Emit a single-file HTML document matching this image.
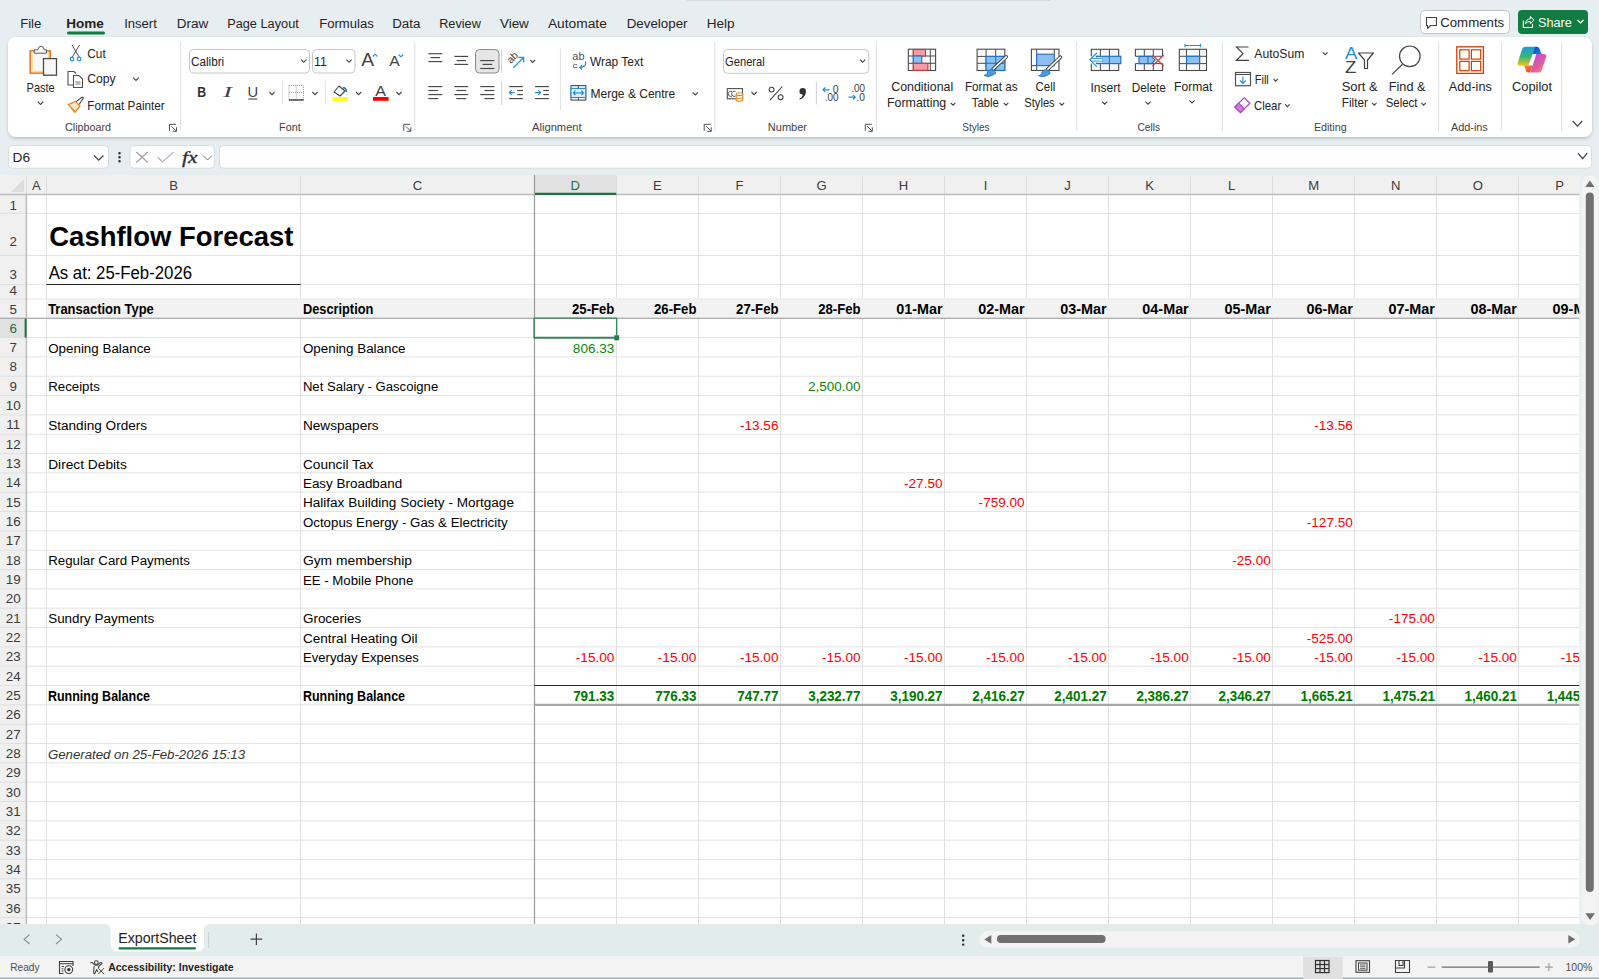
<!DOCTYPE html>
<html><head><meta charset="utf-8"><title>Excel - Cashflow Forecast</title>
<style>html,body{margin:0;padding:0;background:#E6EEF1;overflow:hidden;}svg{display:block;font-family:"Liberation Sans",sans-serif;}</style></head>
<body><svg width="1599" height="979" viewBox="0 0 1599 979">
<defs><clipPath id="gridclip"><rect x="26.4" y="194.5" width="1553.1" height="729.5"/></clipPath></defs>
<rect x="0.00" y="0.00" width="1599.00" height="175.00" fill="#E6EEF1" />
<line x1="687.00" y1="0.50" x2="1050.00" y2="0.50" stroke="#D3D9DD" stroke-width="1" />
<text x="20.18" y="28.00" font-family="Liberation Sans" font-size="13.66" fill="#242424" textLength="21.14" lengthAdjust="spacingAndGlyphs" >File</text>
<text x="66.18" y="28.00" font-family="Liberation Sans" font-size="13.66" fill="#242424" font-weight="bold" textLength="37.64" lengthAdjust="spacingAndGlyphs" >Home</text>
<text x="124.18" y="28.00" font-family="Liberation Sans" font-size="13.66" fill="#242424" textLength="32.64" lengthAdjust="spacingAndGlyphs" >Insert</text>
<text x="176.68" y="28.00" font-family="Liberation Sans" font-size="13.66" fill="#242424" textLength="31.64" lengthAdjust="spacingAndGlyphs" >Draw</text>
<text x="227.18" y="28.00" font-family="Liberation Sans" font-size="13.66" fill="#242424" textLength="71.64" lengthAdjust="spacingAndGlyphs" >Page Layout</text>
<text x="319.18" y="28.00" font-family="Liberation Sans" font-size="13.66" fill="#242424" textLength="54.64" lengthAdjust="spacingAndGlyphs" >Formulas</text>
<text x="392.18" y="28.00" font-family="Liberation Sans" font-size="13.66" fill="#242424" textLength="28.14" lengthAdjust="spacingAndGlyphs" >Data</text>
<text x="439.18" y="28.00" font-family="Liberation Sans" font-size="13.66" fill="#242424" textLength="41.64" lengthAdjust="spacingAndGlyphs" >Review</text>
<text x="499.93" y="28.00" font-family="Liberation Sans" font-size="13.66" fill="#242424" textLength="28.89" lengthAdjust="spacingAndGlyphs" >View</text>
<text x="547.93" y="28.00" font-family="Liberation Sans" font-size="13.66" fill="#242424" textLength="58.89" lengthAdjust="spacingAndGlyphs" >Automate</text>
<text x="626.68" y="28.00" font-family="Liberation Sans" font-size="13.66" fill="#242424" textLength="60.89" lengthAdjust="spacingAndGlyphs" >Developer</text>
<text x="706.68" y="28.00" font-family="Liberation Sans" font-size="13.66" fill="#242424" textLength="27.89" lengthAdjust="spacingAndGlyphs" >Help</text>
<rect x="67.00" y="31.50" width="38.00" height="3.00" fill="#107C41" rx="1.5" />
<rect x="1420.50" y="10.50" width="89.00" height="23.00" fill="#FFFFFF" rx="4" stroke="#C4C4C4" stroke-width="1" />
<path d="M1426.5,17.5 h10 v8 h-6 l-3,3 v-3 h-1 z" fill="none" stroke="#424242" stroke-width="1.1" stroke-linejoin="round"/>
<text x="1440.18" y="26.90" font-family="Liberation Sans" font-size="13.66" fill="#242424" textLength="64.04" lengthAdjust="spacingAndGlyphs" >Comments</text>
<rect x="1518.00" y="10.00" width="70.00" height="24.00" fill="#107C41" rx="4" />
<path d="M1523.3,20.5 v7 h9.2 v-3.8" fill="none" stroke="#FFFFFF" stroke-width="1.1" />
<path d="M1525.4,23.6 q0.8,-4.6 5,-4.8 v-2.4 l3.4,3.8 l-3.4,3.5 v-2.2 q-3,0 -5,2.1 z" fill="none" stroke="#FFFFFF" stroke-width="1" stroke-linejoin="round"/>
<text x="1537.98" y="26.90" font-family="Liberation Sans" font-size="13.66" fill="#FFFFFF" textLength="33.84" lengthAdjust="spacingAndGlyphs" >Share</text>
<path d="M1577.5,20 l3,3 l3,-3" fill="none" stroke="#FFFFFF" stroke-width="1.2" />
<filter id="sh" x="-5%" y="-20%" width="110%" height="150%"><feDropShadow dx="0" dy="1.5" stdDeviation="1.6" flood-color="#000" flood-opacity="0.2"/></filter>
<rect x="8.00" y="37.00" width="1584.00" height="100.00" fill="#FFFFFF" rx="8" filter="url(#sh)"/>
<rect x="8.50" y="145.50" width="100.00" height="22.70" fill="#FFFFFF" rx="4" stroke="#DADCDD" stroke-width="1" />
<text x="12.50" y="162.20" font-family="Liberation Sans" font-size="13.37" fill="#242424" textLength="17.60" lengthAdjust="spacingAndGlyphs" >D6</text>
<path d="M94,155.5 l4.7,4.7 l4.7,-4.7" fill="none" stroke="#424242" stroke-width="1.3" />
<rect x="118.30" y="152.10" width="2.40" height="2.40" fill="#303030" rx="1" />
<rect x="118.30" y="156.10" width="2.40" height="2.40" fill="#303030" rx="1" />
<rect x="118.30" y="160.10" width="2.40" height="2.40" fill="#303030" rx="1" />
<rect x="130.00" y="145.50" width="84.30" height="22.70" fill="#FFFFFF" rx="4" stroke="#DADCDD" stroke-width="1" />
<path d="M136.3,152 l11.5,10.5 M147.8,152 l-11.5,10.5" fill="none" stroke="#9E9E9E" stroke-width="1.1" />
<path d="M158,157.5 l4.5,4.3 l11,-9.6" fill="none" stroke="#A8A8A8" stroke-width="1.1" />
<text x="182.00" y="162.50" font-family="Liberation Serif" font-size="16.72" fill="#303030" font-style="italic" textLength="15.51" lengthAdjust="spacingAndGlyphs" stroke="#303030" stroke-width="0.35">fx</text>
<path d="M203,155.5 l4.5,4.5 l4.5,-4.5" fill="none" stroke="#707070" stroke-width="1" />
<rect x="219.50" y="145.50" width="1372.00" height="22.70" fill="#FFFFFF" rx="4" stroke="#DADCDD" stroke-width="1" />
<path d="M1578,153.2 l4.6,5.5 l4.6,-5.5" fill="none" stroke="#424242" stroke-width="1.2" />
<line x1="180.60" y1="42.00" x2="180.60" y2="131.00" stroke="#E0E0E0" stroke-width="1" />
<line x1="414.80" y1="42.00" x2="414.80" y2="131.00" stroke="#E0E0E0" stroke-width="1" />
<line x1="714.80" y1="42.00" x2="714.80" y2="131.00" stroke="#E0E0E0" stroke-width="1" />
<line x1="876.40" y1="42.00" x2="876.40" y2="131.00" stroke="#E0E0E0" stroke-width="1" />
<line x1="1076.60" y1="42.00" x2="1076.60" y2="131.00" stroke="#E0E0E0" stroke-width="1" />
<line x1="1222.40" y1="42.00" x2="1222.40" y2="131.00" stroke="#E0E0E0" stroke-width="1" />
<line x1="1438.60" y1="42.00" x2="1438.60" y2="131.00" stroke="#E0E0E0" stroke-width="1" />
<line x1="1501.70" y1="42.00" x2="1501.70" y2="131.00" stroke="#E0E0E0" stroke-width="1" />
<line x1="1561.60" y1="42.00" x2="1561.60" y2="131.00" stroke="#E0E0E0" stroke-width="1" />
<text x="65.00" y="131.00" font-family="Liberation Sans" font-size="11.63" fill="#424242" textLength="46.00" lengthAdjust="spacingAndGlyphs" >Clipboard</text>
<text x="279.10" y="131.00" font-family="Liberation Sans" font-size="11.63" fill="#424242" textLength="21.60" lengthAdjust="spacingAndGlyphs" >Font</text>
<text x="532.00" y="131.00" font-family="Liberation Sans" font-size="11.63" fill="#424242" textLength="49.70" lengthAdjust="spacingAndGlyphs" >Alignment</text>
<text x="767.80" y="131.00" font-family="Liberation Sans" font-size="11.63" fill="#424242" textLength="39.20" lengthAdjust="spacingAndGlyphs" >Number</text>
<text x="962.30" y="131.00" font-family="Liberation Sans" font-size="11.63" fill="#424242" textLength="27.30" lengthAdjust="spacingAndGlyphs" >Styles</text>
<text x="1137.50" y="131.00" font-family="Liberation Sans" font-size="11.63" fill="#424242" textLength="22.60" lengthAdjust="spacingAndGlyphs" >Cells</text>
<text x="1313.90" y="131.00" font-family="Liberation Sans" font-size="11.63" fill="#424242" textLength="32.70" lengthAdjust="spacingAndGlyphs" >Editing</text>
<text x="1451.00" y="131.00" font-family="Liberation Sans" font-size="11.63" fill="#424242" textLength="36.80" lengthAdjust="spacingAndGlyphs" >Add-ins</text>
<path d="M169.5,130.8 v-6.5 h6.5 M171.5,126.3 l5,5 M176.5,127.3 v4 h-4" fill="none" stroke="#505050" stroke-width="1" />
<path d="M403.8,130.8 v-6.5 h6.5 M405.8,126.3 l5,5 M410.8,127.3 v4 h-4" fill="none" stroke="#505050" stroke-width="1" />
<path d="M704.2,130.8 v-6.5 h6.5 M706.2,126.3 l5,5 M711.2,127.3 v4 h-4" fill="none" stroke="#505050" stroke-width="1" />
<path d="M865.3,130.8 v-6.5 h6.5 M867.3,126.3 l5,5 M872.3,127.3 v4 h-4" fill="none" stroke="#505050" stroke-width="1" />
<rect x="30.20" y="50.90" width="20.00" height="22.20" fill="#F8F8F8" stroke="#E8761C" stroke-width="1.6" />
<path d="M32.2,52.5 v19 h18 M48.4,52.5 v6" fill="none" stroke="#F9DC96" stroke-width="1.3" />
<path d="M34.2,53.2 v-3.4 h3.6 q0.6,-3.6 3.2,-3.6 q2.6,0 3.2,3.6 h2.3 v3.4 z" fill="#F8F8F8" stroke="#5A5A5A" stroke-width="1" />
<rect x="43.50" y="58.60" width="13.00" height="16.60" fill="#F8F8F8" stroke="#4A4A4A" stroke-width="1.3" />
<text x="26.58" y="92.00" font-family="Liberation Sans" font-size="12.06" fill="#242424" textLength="28.15" lengthAdjust="spacingAndGlyphs" >Paste</text>
<path d="M37.70,101.60 l2.8,2.8 l2.8,-2.8" fill="none" stroke="#424242" stroke-width="1.1" />
<path d="M72,45 l7.5,12.5 M79.5,45 l-7.5,12.5" fill="none" stroke="#505050" stroke-width="1" />
<circle cx="72" cy="59" r="1.8" fill="none" stroke="#1E8FD8" stroke-width="1.2"/><circle cx="79" cy="59" r="1.8" fill="none" stroke="#1E8FD8" stroke-width="1.2"/>
<text x="87.28" y="58.00" font-family="Liberation Sans" font-size="12.06" fill="#242424" textLength="18.45" lengthAdjust="spacingAndGlyphs" >Cut</text>
<path d="M73,85 h-5 v-13.5 h6 l2,2" fill="none" stroke="#505050" stroke-width="1.1" />
<path d="M73.5,75.5 h5.5 l3.5,3.5 v8.5 h-9 z" fill="#FFFFFF" stroke="#505050" stroke-width="1.1" />
<path d="M75.5,82 h5 M75.5,84 h5" fill="none" stroke="#505050" stroke-width="0.8" />
<text x="87.28" y="83.30" font-family="Liberation Sans" font-size="12.06" fill="#242424" textLength="28.45" lengthAdjust="spacingAndGlyphs" >Copy</text>
<path d="M133.20,77.60 l2.8,2.8 l2.8,-2.8" fill="none" stroke="#424242" stroke-width="1.1" />
<path d="M68.3,104.6 l7.2,-3.2 l4.4,4.6 l-5,6.4 z" fill="#FCE6CC" stroke="#E8891C" stroke-width="1.3" stroke-linejoin="round"/>
<path d="M71,107.5 l4,3.5" fill="none" stroke="#E8891C" stroke-width="1" />
<path d="M76,101.6 l6,-4.3 q1.5,-0.6 1.2,1.2 l-4,5.8" fill="#FFFFFF" stroke="#424242" stroke-width="1.1" stroke-linejoin="round"/>
<text x="87.28" y="109.70" font-family="Liberation Sans" font-size="12.06" fill="#242424" textLength="77.45" lengthAdjust="spacingAndGlyphs" >Format Painter</text>
<rect x="189.50" y="49.50" width="120.00" height="23.50" fill="#FFFFFF" rx="4" stroke="#C8C8C8" stroke-width="1" />
<text x="190.96" y="65.80" font-family="Liberation Sans" font-size="12.35" fill="#242424" textLength="33.28" lengthAdjust="spacingAndGlyphs" >Calibri</text>
<path d="M301.20,59.70 l2.6,2.6 l2.6,-2.6" fill="none" stroke="#424242" stroke-width="1.1" />
<rect x="312.50" y="49.50" width="42.50" height="23.50" fill="#FFFFFF" rx="4" stroke="#C8C8C8" stroke-width="1" />
<text x="313.96" y="65.80" font-family="Liberation Sans" font-size="12.35" fill="#242424" textLength="12.78" lengthAdjust="spacingAndGlyphs" >11</text>
<path d="M346.40,59.70 l2.6,2.6 l2.6,-2.6" fill="none" stroke="#424242" stroke-width="1.1" />
<text x="361.28" y="66.00" font-family="Liberation Sans" font-size="18.60" fill="#424242" textLength="12.83" lengthAdjust="spacingAndGlyphs" >A</text>
<path d="M372.8,56.5 l2.3,-2.3 l2.3,2.3" fill="none" stroke="#1E8FD8" stroke-width="1.1" />
<text x="389.15" y="66.00" font-family="Liberation Sans" font-size="14.10" fill="#424242" textLength="10.49" lengthAdjust="spacingAndGlyphs" >A</text>
<path d="M398.6,54.5 l2.3,2.3 l2.3,-2.3" fill="none" stroke="#1E8FD8" stroke-width="1.1" />
<text x="197.15" y="97.00" font-family="Liberation Sans" font-size="14.10" fill="#303030" font-weight="bold" textLength="8.89" lengthAdjust="spacingAndGlyphs" >B</text>
<text x="223.15" y="97.00" font-family="Liberation Serif" font-size="14.10" fill="#404040" font-style="italic" textLength="8.69" lengthAdjust="spacingAndGlyphs" >I</text>
<text x="247.47" y="96.50" font-family="Liberation Sans" font-size="13.81" fill="#404040" textLength="10.66" lengthAdjust="spacingAndGlyphs" >U</text>
<line x1="248.30" y1="99.00" x2="257.30" y2="99.00" stroke="#404040" stroke-width="1.1" />
<path d="M269.40,92.00 l2.6,2.6 l2.6,-2.6" fill="none" stroke="#424242" stroke-width="1.1" />
<line x1="282.50" y1="81.00" x2="282.50" y2="104.50" stroke="#E0E0E0" stroke-width="1" />
<path d="M289,85.5 h14.5 v14 h-14.5 z" fill="none" stroke="#909090" stroke-width="0.9" stroke-dasharray="1,1"/>
<path d="M296.2,85.5 v14 M289,92.5 h14.5" fill="none" stroke="#909090" stroke-width="0.9" stroke-dasharray="1,1"/>
<line x1="288.80" y1="100.00" x2="303.80" y2="100.00" stroke="#404040" stroke-width="1.4" />
<path d="M312.40,92.00 l2.6,2.6 l2.6,-2.6" fill="none" stroke="#424242" stroke-width="1.1" />
<line x1="325.30" y1="81.00" x2="325.30" y2="104.50" stroke="#E0E0E0" stroke-width="1" />
<path d="M334,92 l5,-6 l6,5 l-5,5 z" fill="#FFFFFF" stroke="#424242" stroke-width="1.1" stroke-linejoin="round"/>
<path d="M343,88 q3,-1 3.5,4" fill="none" stroke="#1E6FC8" stroke-width="1.5" />
<rect x="332.40" y="97.00" width="15.40" height="3.80" fill="#FFFF00" />
<path d="M356.00,92.00 l2.6,2.6 l2.6,-2.6" fill="none" stroke="#424242" stroke-width="1.1" />
<text x="375.39" y="95.70" font-family="Liberation Sans" font-size="15.12" fill="#424242" textLength="10.71" lengthAdjust="spacingAndGlyphs" >A</text>
<rect x="373.00" y="97.00" width="15.60" height="3.80" fill="#FF0000" />
<path d="M396.40,92.00 l2.6,2.6 l2.6,-2.6" fill="none" stroke="#424242" stroke-width="1.1" />
<line x1="428.30" y1="53.70" x2="442.30" y2="53.70" stroke="#4A4A4A" stroke-width="1.15" />
<line x1="430.50" y1="57.60" x2="440.10" y2="57.60" stroke="#4A4A4A" stroke-width="1.15" />
<line x1="428.30" y1="61.60" x2="442.30" y2="61.60" stroke="#4A4A4A" stroke-width="1.15" />
<line x1="454.30" y1="56.40" x2="468.20" y2="56.40" stroke="#4A4A4A" stroke-width="1.15" />
<line x1="456.60" y1="60.60" x2="466.00" y2="60.60" stroke="#4A4A4A" stroke-width="1.15" />
<line x1="454.30" y1="64.40" x2="468.20" y2="64.40" stroke="#4A4A4A" stroke-width="1.15" />
<rect x="475.50" y="49.50" width="23.50" height="23.50" fill="#E6E6E6" rx="4" stroke="#8A8A8A" stroke-width="1" />
<line x1="480.20" y1="60.60" x2="494.40" y2="60.60" stroke="#4A4A4A" stroke-width="1.15" />
<line x1="482.60" y1="64.40" x2="492.20" y2="64.40" stroke="#4A4A4A" stroke-width="1.15" />
<line x1="480.20" y1="68.50" x2="494.40" y2="68.50" stroke="#4A4A4A" stroke-width="1.15" />
<line x1="501.70" y1="49.60" x2="501.70" y2="72.90" stroke="#D0D0D0" stroke-width="1" />
<text x="507.87" y="64.00" font-family="Liberation Sans" font-size="10.47" fill="#424242" textLength="11.26" lengthAdjust="spacingAndGlyphs" transform="translate(-1.8,-2.6) rotate(-45 513.5 59.5)">ab</text>
<path d="M513.3,67.9 l10.3,-10.4 M518.5,57.4 h5.2 v5.2" fill="none" stroke="#1E8FD8" stroke-width="1.2" />
<path d="M530.30,60.00 l2.4,2.4 l2.4,-2.4" fill="none" stroke="#424242" stroke-width="1.1" />
<line x1="428.30" y1="86.60" x2="442.30" y2="86.60" stroke="#4A4A4A" stroke-width="1.15" />
<line x1="428.30" y1="90.50" x2="438.20" y2="90.50" stroke="#4A4A4A" stroke-width="1.15" />
<line x1="428.30" y1="94.60" x2="442.30" y2="94.60" stroke="#4A4A4A" stroke-width="1.15" />
<line x1="428.30" y1="98.60" x2="438.20" y2="98.60" stroke="#4A4A4A" stroke-width="1.15" />
<line x1="454.30" y1="86.60" x2="468.20" y2="86.60" stroke="#4A4A4A" stroke-width="1.15" />
<line x1="456.30" y1="90.50" x2="466.20" y2="90.50" stroke="#4A4A4A" stroke-width="1.15" />
<line x1="454.30" y1="94.60" x2="468.20" y2="94.60" stroke="#4A4A4A" stroke-width="1.15" />
<line x1="456.30" y1="98.60" x2="466.20" y2="98.60" stroke="#4A4A4A" stroke-width="1.15" />
<line x1="480.20" y1="86.60" x2="494.40" y2="86.60" stroke="#4A4A4A" stroke-width="1.15" />
<line x1="484.40" y1="90.50" x2="494.40" y2="90.50" stroke="#4A4A4A" stroke-width="1.15" />
<line x1="480.20" y1="94.60" x2="494.40" y2="94.60" stroke="#4A4A4A" stroke-width="1.15" />
<line x1="484.40" y1="98.60" x2="494.40" y2="98.60" stroke="#4A4A4A" stroke-width="1.15" />
<line x1="501.70" y1="81.60" x2="501.70" y2="104.80" stroke="#D0D0D0" stroke-width="1" />
<line x1="509.10" y1="86.60" x2="522.90" y2="86.60" stroke="#4A4A4A" stroke-width="1.15" />
<line x1="517.20" y1="90.50" x2="522.90" y2="90.50" stroke="#4A4A4A" stroke-width="1.15" />
<line x1="517.20" y1="94.60" x2="522.90" y2="94.60" stroke="#4A4A4A" stroke-width="1.15" />
<line x1="509.10" y1="98.60" x2="522.90" y2="98.60" stroke="#4A4A4A" stroke-width="1.15" />
<path d="M514.6,92.6 h-5 M511.6,90.4 l-2.2,2.2 l2.2,2.2" fill="none" stroke="#1E8FD8" stroke-width="1.2" />
<line x1="535.10" y1="86.60" x2="548.90" y2="86.60" stroke="#4A4A4A" stroke-width="1.15" />
<line x1="543.30" y1="90.50" x2="548.90" y2="90.50" stroke="#4A4A4A" stroke-width="1.15" />
<line x1="543.30" y1="94.60" x2="548.90" y2="94.60" stroke="#4A4A4A" stroke-width="1.15" />
<line x1="535.10" y1="98.60" x2="548.90" y2="98.60" stroke="#4A4A4A" stroke-width="1.15" />
<path d="M535.1,92.6 h5.2 M538.4,90.4 l2.2,2.2 l-2.2,2.2" fill="none" stroke="#1E8FD8" stroke-width="1.2" />
<line x1="560.40" y1="48.60" x2="560.40" y2="110.30" stroke="#E0E0E0" stroke-width="1" />
<text x="572.39" y="60.20" font-family="Liberation Sans" font-size="10.17" fill="#505050" textLength="12.22" lengthAdjust="spacingAndGlyphs" >ab</text>
<text x="572.55" y="68.30" font-family="Liberation Sans" font-size="7.56" fill="#505050" textLength="5.11" lengthAdjust="spacingAndGlyphs" >c</text>
<path d="M585.5,61.5 q1.2,5.5 -5.5,6 M582,65.2 l-2.2,2.3 l2.2,2.2" fill="none" stroke="#1E8FD8" stroke-width="1.2" />
<text x="589.88" y="66.00" font-family="Liberation Sans" font-size="12.06" fill="#242424" textLength="53.45" lengthAdjust="spacingAndGlyphs" >Wrap Text</text>
<rect x="571.00" y="85.60" width="14.80" height="14.50" fill="#FAFAFA" stroke="#505050" stroke-width="1.1" />
<rect x="571.00" y="88.40" width="14.80" height="9.10" fill="#E3F0FB" stroke="#1E8FD8" stroke-width="1.1" />
<line x1="578.40" y1="85.60" x2="578.40" y2="88.40" stroke="#505050" stroke-width="1" />
<line x1="578.40" y1="97.50" x2="578.40" y2="100.10" stroke="#505050" stroke-width="1" />
<path d="M573.3,92.9 h10.2 M575.5,90.7 l-2.2,2.2 l2.2,2.2 M581.3,90.7 l2.2,2.2 l-2.2,2.2" fill="none" stroke="#1E8FD8" stroke-width="1.2" />
<text x="590.48" y="98.00" font-family="Liberation Sans" font-size="12.06" fill="#242424" textLength="84.85" lengthAdjust="spacingAndGlyphs" >Merge &amp; Centre</text>
<path d="M692.70,92.30 l2.6,2.6 l2.6,-2.6" fill="none" stroke="#424242" stroke-width="1.1" />
<rect x="723.50" y="49.50" width="145.30" height="23.80" fill="#FFFFFF" rx="4" stroke="#C8C8C8" stroke-width="1" />
<text x="725.06" y="66.00" font-family="Liberation Sans" font-size="12.35" fill="#242424" textLength="39.68" lengthAdjust="spacingAndGlyphs" >General</text>
<path d="M860.00,59.70 l2.6,2.6 l2.6,-2.6" fill="none" stroke="#424242" stroke-width="1.1" />
<rect x="727.30" y="88.60" width="15.20" height="10.20" fill="#FFFFFF" stroke="#505050" stroke-width="1.1" />
<path d="M732,91.5 a2.6,2.6 0 1 0 0,4.6 M735.5,91.5 a2.6,2.6 0 1 0 0,4.6" fill="none" stroke="#505050" stroke-width="1" />
<path d="M736.2,94.2 v5.5 q0,1.6 3.3,1.6 q3.3,0 3.3,-1.6 v-5.5" fill="#FFFFFF" stroke="#E8891C" stroke-width="1.1" />
<ellipse cx="739.5" cy="94.2" rx="3.3" ry="1.4" fill="#FFFFFF" stroke="#E8891C" stroke-width="1.1"/>
<path d="M736.2,97 q0,1.5 3.3,1.5 q3.3,0 3.3,-1.5" fill="none" stroke="#E8891C" stroke-width="1" />
<path d="M751.50,92.00 l2.6,2.6 l2.6,-2.6" fill="none" stroke="#424242" stroke-width="1.1" />
<path d="M782.3,86.5 L770,100.2" fill="none" stroke="#424242" stroke-width="1.1" />
<circle cx="771.6" cy="89.6" r="2.4" fill="none" stroke="#424242" stroke-width="1.1"/><circle cx="780.6" cy="97.2" r="2.4" fill="none" stroke="#424242" stroke-width="1.1"/>
<circle cx="802.7" cy="91.3" r="3.2" fill="#303030"/>
<path d="M805.6,92 q0.5,5 -5.8,7.6 l-0.4,-1 q3.6,-1.8 3.4,-4.6 z" fill="#303030" />
<line x1="816.40" y1="81.50" x2="816.40" y2="104.60" stroke="#D0D0D0" stroke-width="1" />
<text x="832.89" y="93.30" font-family="Liberation Sans" font-size="10.17" fill="#404040" textLength="5.82" lengthAdjust="spacingAndGlyphs" >0</text>
<text x="824.89" y="100.60" font-family="Liberation Sans" font-size="10.17" fill="#404040" textLength="13.72" lengthAdjust="spacingAndGlyphs" >.00</text>
<path d="M829.5,89.8 h-6.5 M825.3,87.5 l-2.3,2.3 l2.3,2.3" fill="none" stroke="#1E8FD8" stroke-width="1.2" />
<text x="851.39" y="92.30" font-family="Liberation Sans" font-size="10.17" fill="#404040" textLength="13.72" lengthAdjust="spacingAndGlyphs" >.00</text>
<text x="856.39" y="100.60" font-family="Liberation Sans" font-size="10.17" fill="#404040" textLength="8.52" lengthAdjust="spacingAndGlyphs" >.0</text>
<path d="M848.5,97.2 h6.8 M853,94.9 l2.3,2.3 l-2.3,2.3" fill="none" stroke="#1E8FD8" stroke-width="1.2" />
<rect x="908.30" y="49.20" width="27.30" height="21.30" fill="#FAFAFA" stroke="#4A4A4A" stroke-width="1.1" />
<line x1="913.30" y1="49.20" x2="913.30" y2="70.50" stroke="#4A4A4A" stroke-width="1" />
<line x1="930.30" y1="49.20" x2="930.30" y2="70.50" stroke="#4A4A4A" stroke-width="1" />
<line x1="908.30" y1="56.00" x2="935.60" y2="56.00" stroke="#4A4A4A" stroke-width="1" />
<line x1="908.30" y1="63.30" x2="935.60" y2="63.30" stroke="#4A4A4A" stroke-width="1" />
<rect x="913.30" y="49.50" width="12.20" height="6.50" fill="#F59BA3" stroke="#D13438" stroke-width="1.1" />
<rect x="913.30" y="56.00" width="8.50" height="7.30" fill="#8CC0EE" stroke="#1F6FC5" stroke-width="1.1" />
<rect x="913.30" y="63.30" width="14.60" height="7.00" fill="#F59BA3" stroke="#D13438" stroke-width="1.1" />
<text x="891.28" y="90.60" font-family="Liberation Sans" font-size="12.06" fill="#242424" textLength="61.95" lengthAdjust="spacingAndGlyphs" >Conditional</text>
<text x="886.98" y="106.60" font-family="Liberation Sans" font-size="12.06" fill="#242424" textLength="59.25" lengthAdjust="spacingAndGlyphs" >Formatting</text>
<path d="M950.70,102.85 l2.3,2.3 l2.3,-2.3" fill="none" stroke="#424242" stroke-width="1.1" />
<rect x="977.10" y="49.20" width="27.70" height="21.30" fill="#FAFAFA" stroke="#4A4A4A" stroke-width="1.1" />
<line x1="986.10" y1="49.20" x2="986.10" y2="70.50" stroke="#4A4A4A" stroke-width="1" />
<line x1="995.70" y1="49.20" x2="995.70" y2="56.40" stroke="#4A4A4A" stroke-width="1" />
<line x1="977.10" y1="56.40" x2="1004.80" y2="56.40" stroke="#4A4A4A" stroke-width="1" />
<line x1="977.10" y1="63.30" x2="986.10" y2="63.30" stroke="#4A4A4A" stroke-width="1" />
<rect x="986.10" y="56.40" width="18.70" height="14.10" fill="#8CC0EE" stroke="#1F6FC5" stroke-width="1.1" />
<line x1="995.70" y1="56.40" x2="995.70" y2="70.50" stroke="#1F6FC5" stroke-width="1" />
<line x1="986.10" y1="63.30" x2="1004.80" y2="63.30" stroke="#1F6FC5" stroke-width="1" />
<line x1="1006.20" y1="56.80" x2="993.20" y2="69.00" stroke="#424242" stroke-width="3.6" stroke-linecap="round"/>
<line x1="1006.20" y1="56.80" x2="993.20" y2="69.00" stroke="#FFFFFF" stroke-width="1.6" stroke-linecap="round"/>
<path d="M995.7,73.2 q-1.5,-4.5 -5.5,-3.5 q-3,1 -2.8,3.5 q-1,1.8 -3.2,2.2 q5,2.8 11.5,-2.2 z" fill="#4A9AE0" stroke="#1F6FC5" stroke-width="0.9" />
<text x="964.98" y="90.60" font-family="Liberation Sans" font-size="12.06" fill="#242424" textLength="52.65" lengthAdjust="spacingAndGlyphs" >Format as</text>
<text x="971.78" y="106.60" font-family="Liberation Sans" font-size="12.06" fill="#242424" textLength="26.95" lengthAdjust="spacingAndGlyphs" >Table</text>
<path d="M1003.70,102.85 l2.3,2.3 l2.3,-2.3" fill="none" stroke="#424242" stroke-width="1.1" />
<rect x="1031.40" y="49.20" width="27.60" height="21.30" fill="#FAFAFA" stroke="#4A4A4A" stroke-width="1.1" />
<line x1="1036.70" y1="49.20" x2="1036.70" y2="70.50" stroke="#4A4A4A" stroke-width="1" />
<line x1="1054.30" y1="49.20" x2="1054.30" y2="54.20" stroke="#4A4A4A" stroke-width="1" />
<line x1="1031.40" y1="65.60" x2="1036.70" y2="65.60" stroke="#4A4A4A" stroke-width="1" />
<rect x="1036.70" y="54.20" width="17.60" height="11.40" fill="#8CC0EE" stroke="#1F6FC5" stroke-width="1.1" />
<line x1="1060.40" y1="57.20" x2="1047.60" y2="69.30" stroke="#424242" stroke-width="3.6" stroke-linecap="round"/>
<line x1="1060.40" y1="57.20" x2="1047.60" y2="69.30" stroke="#FFFFFF" stroke-width="1.6" stroke-linecap="round"/>
<path d="M1050.1,73.4 q-1.5,-4.5 -5.5,-3.5 q-3,1 -2.8,3.5 q-1,1.8 -3.2,2.2 q5,2.8 11.5,-2.2 z" fill="#4A9AE0" stroke="#1F6FC5" stroke-width="0.9" />
<text x="1035.48" y="90.60" font-family="Liberation Sans" font-size="12.06" fill="#242424" textLength="19.85" lengthAdjust="spacingAndGlyphs" >Cell</text>
<text x="1024.28" y="106.60" font-family="Liberation Sans" font-size="12.06" fill="#242424" textLength="30.45" lengthAdjust="spacingAndGlyphs" >Styles</text>
<path d="M1059.50,102.85 l2.3,2.3 l2.3,-2.3" fill="none" stroke="#424242" stroke-width="1.1" />
<rect x="1091.30" y="49.30" width="27.40" height="21.20" fill="#FAFAFA" stroke="#4A4A4A" stroke-width="1.1" />
<line x1="1100.40" y1="49.30" x2="1100.40" y2="70.50" stroke="#4A4A4A" stroke-width="1" />
<line x1="1109.40" y1="49.30" x2="1109.40" y2="70.50" stroke="#4A4A4A" stroke-width="1" />
<rect x="1088.00" y="56.30" width="10.00" height="7.30" fill="#FFFFFF" />
<rect x="1096.40" y="56.30" width="24.40" height="7.30" fill="#8CC0EE" stroke="#1F6FC5" stroke-width="1.2" />
<line x1="1109.40" y1="56.30" x2="1109.40" y2="63.60" stroke="#1F6FC5" stroke-width="1.1" />
<rect x="1092.00" y="57.50" width="10.00" height="5.00" fill="#FFFFFF" />
<path d="M1102.5,58.6 h-11 M1102.5,61.1 h-11" fill="none" stroke="#1E8FD8" stroke-width="0.9" />
<path d="M1096.8,53 l-7,6.85 l7,6.85" fill="none" stroke="#1E8FD8" stroke-width="1.1" />
<text x="1090.48" y="91.60" font-family="Liberation Sans" font-size="12.06" fill="#242424" textLength="30.15" lengthAdjust="spacingAndGlyphs" >Insert</text>
<path d="M1102.10,101.60 l2.6,2.6 l2.6,-2.6" fill="none" stroke="#424242" stroke-width="1.1" />
<path d="M1135.4,56.3 v-7 h27.2 v7 M1135.4,63.6 v6.9 h27.2 v-6.9" fill="#FAFAFA" stroke="#4A4A4A" stroke-width="1.1" />
<line x1="1135.40" y1="56.30" x2="1162.60" y2="56.30" stroke="#4A4A4A" stroke-width="1" />
<line x1="1135.40" y1="63.60" x2="1162.60" y2="63.60" stroke="#4A4A4A" stroke-width="1" />
<line x1="1144.30" y1="49.30" x2="1144.30" y2="56.30" stroke="#4A4A4A" stroke-width="1" />
<line x1="1153.30" y1="49.30" x2="1153.30" y2="56.30" stroke="#4A4A4A" stroke-width="1" />
<line x1="1144.30" y1="63.60" x2="1144.30" y2="70.50" stroke="#4A4A4A" stroke-width="1" />
<line x1="1153.30" y1="63.60" x2="1153.30" y2="70.50" stroke="#4A4A4A" stroke-width="1" />
<path d="M1139,56.3 h12.5 l3.6,3.65 l-3.6,3.65 h-12.5 z" fill="#8CC0EE" stroke="#1F6FC5" stroke-width="1.2" />
<line x1="1148.00" y1="56.30" x2="1148.00" y2="63.60" stroke="#1F6FC5" stroke-width="1.1" />
<path d="M1152.5,55 l11.2,11 M1163.7,55 l-11.2,11" fill="none" stroke="#E8343C" stroke-width="1.1" />
<text x="1131.78" y="91.60" font-family="Liberation Sans" font-size="12.06" fill="#242424" textLength="33.95" lengthAdjust="spacingAndGlyphs" >Delete</text>
<path d="M1145.50,101.60 l2.6,2.6 l2.6,-2.6" fill="none" stroke="#424242" stroke-width="1.1" />
<rect x="1179.30" y="49.30" width="27.20" height="21.20" fill="#FAFAFA" stroke="#4A4A4A" stroke-width="1.1" />
<line x1="1186.50" y1="49.30" x2="1186.50" y2="70.50" stroke="#4A4A4A" stroke-width="1" />
<line x1="1199.60" y1="49.30" x2="1199.60" y2="70.50" stroke="#4A4A4A" stroke-width="1" />
<line x1="1179.30" y1="56.30" x2="1206.50" y2="56.30" stroke="#4A4A4A" stroke-width="1" />
<line x1="1179.30" y1="63.60" x2="1206.50" y2="63.60" stroke="#4A4A4A" stroke-width="1" />
<rect x="1186.50" y="56.30" width="13.10" height="7.30" fill="#8CC0EE" stroke="#1F6FC5" stroke-width="1.2" />
<path d="M1185,45.5 h15.4 M1185,43.7 v3.6 M1200.4,43.7 v3.6" fill="none" stroke="#1E8FD8" stroke-width="1.1" />
<text x="1173.98" y="90.60" font-family="Liberation Sans" font-size="12.06" fill="#242424" textLength="38.45" lengthAdjust="spacingAndGlyphs" >Format</text>
<path d="M1189.40,100.30 l2.6,2.6 l2.6,-2.6" fill="none" stroke="#424242" stroke-width="1.1" />
<path d="M1248.5,47 h-12 l6.5,6.7 l-6.5,6.7 h12.5" fill="none" stroke="#424242" stroke-width="1.2" />
<text x="1254.28" y="57.90" font-family="Liberation Sans" font-size="12.06" fill="#242424" textLength="50.05" lengthAdjust="spacingAndGlyphs" >AutoSum</text>
<path d="M1322.80,52.30 l2.4,2.4 l2.4,-2.4" fill="none" stroke="#424242" stroke-width="1.1" />
<rect x="1235.50" y="72.50" width="15.00" height="13.20" fill="#FFFFFF" stroke="#505050" stroke-width="1.2" />
<line x1="1235.50" y1="74.50" x2="1250.50" y2="74.50" stroke="#505050" stroke-width="1" />
<path d="M1242.9,76.5 v6.5 M1240,80.5 l2.9,2.9 l2.9,-2.9" fill="none" stroke="#1E8FD8" stroke-width="1.1" />
<text x="1254.78" y="83.50" font-family="Liberation Sans" font-size="12.06" fill="#242424" textLength="14.05" lengthAdjust="spacingAndGlyphs" >Fill</text>
<path d="M1273.50,78.90 l2.2,2.2 l2.2,-2.2" fill="none" stroke="#424242" stroke-width="1.1" />
<path d="M1234.9,107 L1244.25,97.6 L1249.9,103.25 L1240.5,112.6 Z" fill="#FAFAFA" stroke="#B146C2" stroke-width="1.2" stroke-linejoin="round"/>
<path d="M1234.9,107 L1238.7,103.2 L1244.3,108.8 L1240.5,112.6 Z" fill="#C77ED3" stroke="#B146C2" stroke-width="1.1" stroke-linejoin="round"/>
<text x="1253.98" y="109.60" font-family="Liberation Sans" font-size="12.06" fill="#242424" textLength="27.25" lengthAdjust="spacingAndGlyphs" >Clear</text>
<path d="M1285.20,104.40 l2.2,2.2 l2.2,-2.2" fill="none" stroke="#424242" stroke-width="1.1" />
<text x="1344.90" y="58.70" font-family="Liberation Sans" font-size="16.72" fill="#1E8FD8" textLength="12.31" lengthAdjust="spacingAndGlyphs" >A</text>
<text x="1345.00" y="73.00" font-family="Liberation Sans" font-size="16.72" fill="#424242" textLength="11.31" lengthAdjust="spacingAndGlyphs" >Z</text>
<path d="M1358.5,53 h15 l-6,7 v8.5 h-3 v-8.5 z" fill="#FFFFFF" stroke="#424242" stroke-width="1.2" stroke-linejoin="round"/>
<text x="1341.68" y="90.60" font-family="Liberation Sans" font-size="12.06" fill="#242424" textLength="36.05" lengthAdjust="spacingAndGlyphs" >Sort &amp;</text>
<text x="1341.68" y="106.90" font-family="Liberation Sans" font-size="12.06" fill="#242424" textLength="26.25" lengthAdjust="spacingAndGlyphs" >Filter</text>
<path d="M1372.10,102.90 l2.2,2.2 l2.2,-2.2" fill="none" stroke="#424242" stroke-width="1.1" />
<circle cx="1409.8" cy="56.3" r="10.3" fill="none" stroke="#424242" stroke-width="1.2"/>
<line x1="1392.00" y1="74.40" x2="1402.50" y2="64.20" stroke="#424242" stroke-width="1.2" />
<text x="1388.78" y="90.60" font-family="Liberation Sans" font-size="12.06" fill="#242424" textLength="36.65" lengthAdjust="spacingAndGlyphs" >Find &amp;</text>
<text x="1385.78" y="106.90" font-family="Liberation Sans" font-size="12.06" fill="#242424" textLength="31.65" lengthAdjust="spacingAndGlyphs" >Select</text>
<path d="M1421.40,102.90 l2.2,2.2 l2.2,-2.2" fill="none" stroke="#424242" stroke-width="1.1" />
<rect x="1456.80" y="46.80" width="26.60" height="26.60" fill="none" stroke="#D83B01" stroke-width="1.3" />
<rect x="1459.80" y="49.80" width="9.30" height="9.30" fill="none" stroke="#D83B01" stroke-width="1.2" />
<rect x="1471.40" y="49.80" width="9.30" height="9.30" fill="none" stroke="#D83B01" stroke-width="1.2" />
<rect x="1459.80" y="61.40" width="9.30" height="9.30" fill="none" stroke="#D83B01" stroke-width="1.2" />
<rect x="1471.40" y="61.40" width="9.30" height="9.30" fill="none" stroke="#D83B01" stroke-width="1.2" />
<text x="1448.88" y="90.70" font-family="Liberation Sans" font-size="12.06" fill="#242424" textLength="42.95" lengthAdjust="spacingAndGlyphs" >Add-ins</text>
<defs><linearGradient id="cp1" x1="0" y1="0" x2="0" y2="1"><stop offset="0" stop-color="#1B9DE2"/><stop offset="0.5" stop-color="#2FB67A"/><stop offset="1" stop-color="#F0C419"/></linearGradient>
<linearGradient id="cp2" x1="0" y1="0" x2="1" y2="1"><stop offset="0" stop-color="#A64BE8"/><stop offset="0.6" stop-color="#E85C9A"/><stop offset="1" stop-color="#F8A34A"/></linearGradient>
<linearGradient id="cp3" x1="0" y1="0" x2="1" y2="1"><stop offset="0" stop-color="#0B3FCB"/><stop offset="1" stop-color="#1A7FE8"/></linearGradient>
<linearGradient id="cp4" x1="0" y1="0" x2="1" y2="1"><stop offset="0" stop-color="#FF8A3D"/><stop offset="1" stop-color="#E2402A"/></linearGradient></defs>
<path d="M1534.8,46.8 h2.6 q1.8,0.3 2.5,3 q0.6,3.6 2.5,4.3 h-10.5 z" fill="url(#cp3)" />
<path d="M1525.5,46.8 h9.8 l-6.4,17.3 q-0.6,1.4 -2.2,1.4 h-7.5 q-2,0 -1.6,-2.2 l4.3,-13.5 q0.9,-3 3.6,-3 z" fill="url(#cp1)" />
<path d="M1523,65.6 h9.6 l-2.6,6.9 h-2.2 q-1.5,0 -2.1,-2.4 q-0.6,-3.8 -2.7,-4.5 z" fill="url(#cp4)" />
<path d="M1536.3,54.1 h7.6 q2.7,0 2.4,2.6 l-4.8,14 q-0.6,1.8 -2.4,1.8 h-8.7 z" fill="url(#cp2)" />
<text x="1511.98" y="90.70" font-family="Liberation Sans" font-size="12.06" fill="#242424" textLength="40.05" lengthAdjust="spacingAndGlyphs" >Copilot</text>
<path d="M1572.7,121 l4.75,5.1 l4.75,-5.1" fill="none" stroke="#424242" stroke-width="1.2" />
<rect x="0.00" y="175.00" width="1579.50" height="749.00" fill="#FFFFFF" />
<rect x="0.00" y="175.00" width="1579.50" height="19.50" fill="#F0F0F0" />
<rect x="0.00" y="194.50" width="26.40" height="729.50" fill="#F0F0F0" />
<g clip-path="url(#gridclip)">
<line x1="46.50" y1="194.50" x2="46.50" y2="924.00" stroke="#E1E1E1" stroke-width="1" />
<line x1="300.50" y1="194.50" x2="300.50" y2="924.00" stroke="#E1E1E1" stroke-width="1" />
<line x1="534.50" y1="194.50" x2="534.50" y2="924.00" stroke="#E1E1E1" stroke-width="1" />
<line x1="616.50" y1="194.50" x2="616.50" y2="924.00" stroke="#E1E1E1" stroke-width="1" />
<line x1="698.50" y1="194.50" x2="698.50" y2="924.00" stroke="#E1E1E1" stroke-width="1" />
<line x1="780.50" y1="194.50" x2="780.50" y2="924.00" stroke="#E1E1E1" stroke-width="1" />
<line x1="862.50" y1="194.50" x2="862.50" y2="924.00" stroke="#E1E1E1" stroke-width="1" />
<line x1="944.50" y1="194.50" x2="944.50" y2="924.00" stroke="#E1E1E1" stroke-width="1" />
<line x1="1026.50" y1="194.50" x2="1026.50" y2="924.00" stroke="#E1E1E1" stroke-width="1" />
<line x1="1108.50" y1="194.50" x2="1108.50" y2="924.00" stroke="#E1E1E1" stroke-width="1" />
<line x1="1190.50" y1="194.50" x2="1190.50" y2="924.00" stroke="#E1E1E1" stroke-width="1" />
<line x1="1272.50" y1="194.50" x2="1272.50" y2="924.00" stroke="#E1E1E1" stroke-width="1" />
<line x1="1354.50" y1="194.50" x2="1354.50" y2="924.00" stroke="#E1E1E1" stroke-width="1" />
<line x1="1436.50" y1="194.50" x2="1436.50" y2="924.00" stroke="#E1E1E1" stroke-width="1" />
<line x1="1518.50" y1="194.50" x2="1518.50" y2="924.00" stroke="#E1E1E1" stroke-width="1" />
<line x1="1600.50" y1="194.50" x2="1600.50" y2="924.00" stroke="#E1E1E1" stroke-width="1" />
<line x1="26.40" y1="213.40" x2="1579.50" y2="213.40" stroke="#E3E3E3" stroke-width="1" />
<line x1="26.40" y1="255.50" x2="1579.50" y2="255.50" stroke="#E3E3E3" stroke-width="1" />
<line x1="26.40" y1="284.50" x2="1579.50" y2="284.50" stroke="#E3E3E3" stroke-width="1" />
<line x1="26.40" y1="299.00" x2="1579.50" y2="299.00" stroke="#E3E3E3" stroke-width="1" />
<line x1="26.40" y1="318.25" x2="1579.50" y2="318.25" stroke="#E3E3E3" stroke-width="1" />
<line x1="26.40" y1="337.58" x2="1579.50" y2="337.58" stroke="#E3E3E3" stroke-width="1" />
<line x1="26.40" y1="356.91" x2="1579.50" y2="356.91" stroke="#E3E3E3" stroke-width="1" />
<line x1="26.40" y1="376.24" x2="1579.50" y2="376.24" stroke="#E3E3E3" stroke-width="1" />
<line x1="26.40" y1="395.57" x2="1579.50" y2="395.57" stroke="#E3E3E3" stroke-width="1" />
<line x1="26.40" y1="414.90" x2="1579.50" y2="414.90" stroke="#E3E3E3" stroke-width="1" />
<line x1="26.40" y1="434.23" x2="1579.50" y2="434.23" stroke="#E3E3E3" stroke-width="1" />
<line x1="26.40" y1="453.56" x2="1579.50" y2="453.56" stroke="#E3E3E3" stroke-width="1" />
<line x1="26.40" y1="472.89" x2="1579.50" y2="472.89" stroke="#E3E3E3" stroke-width="1" />
<line x1="26.40" y1="492.22" x2="1579.50" y2="492.22" stroke="#E3E3E3" stroke-width="1" />
<line x1="26.40" y1="511.55" x2="1579.50" y2="511.55" stroke="#E3E3E3" stroke-width="1" />
<line x1="26.40" y1="530.88" x2="1579.50" y2="530.88" stroke="#E3E3E3" stroke-width="1" />
<line x1="26.40" y1="550.21" x2="1579.50" y2="550.21" stroke="#E3E3E3" stroke-width="1" />
<line x1="26.40" y1="569.54" x2="1579.50" y2="569.54" stroke="#E3E3E3" stroke-width="1" />
<line x1="26.40" y1="588.87" x2="1579.50" y2="588.87" stroke="#E3E3E3" stroke-width="1" />
<line x1="26.40" y1="608.20" x2="1579.50" y2="608.20" stroke="#E3E3E3" stroke-width="1" />
<line x1="26.40" y1="627.53" x2="1579.50" y2="627.53" stroke="#E3E3E3" stroke-width="1" />
<line x1="26.40" y1="646.86" x2="1579.50" y2="646.86" stroke="#E3E3E3" stroke-width="1" />
<line x1="26.40" y1="666.19" x2="1579.50" y2="666.19" stroke="#E3E3E3" stroke-width="1" />
<line x1="26.40" y1="685.52" x2="1579.50" y2="685.52" stroke="#E3E3E3" stroke-width="1" />
<line x1="26.40" y1="704.85" x2="1579.50" y2="704.85" stroke="#E3E3E3" stroke-width="1" />
<line x1="26.40" y1="724.18" x2="1579.50" y2="724.18" stroke="#E3E3E3" stroke-width="1" />
<line x1="26.40" y1="743.51" x2="1579.50" y2="743.51" stroke="#E3E3E3" stroke-width="1" />
<line x1="26.40" y1="762.84" x2="1579.50" y2="762.84" stroke="#E3E3E3" stroke-width="1" />
<line x1="26.40" y1="782.17" x2="1579.50" y2="782.17" stroke="#E3E3E3" stroke-width="1" />
<line x1="26.40" y1="801.50" x2="1579.50" y2="801.50" stroke="#E3E3E3" stroke-width="1" />
<line x1="26.40" y1="820.83" x2="1579.50" y2="820.83" stroke="#E3E3E3" stroke-width="1" />
<line x1="26.40" y1="840.16" x2="1579.50" y2="840.16" stroke="#E3E3E3" stroke-width="1" />
<line x1="26.40" y1="859.49" x2="1579.50" y2="859.49" stroke="#E3E3E3" stroke-width="1" />
<line x1="26.40" y1="878.82" x2="1579.50" y2="878.82" stroke="#E3E3E3" stroke-width="1" />
<line x1="26.40" y1="898.15" x2="1579.50" y2="898.15" stroke="#E3E3E3" stroke-width="1" />
<line x1="26.40" y1="917.48" x2="1579.50" y2="917.48" stroke="#E3E3E3" stroke-width="1" />
<line x1="26.40" y1="936.81" x2="1579.50" y2="936.81" stroke="#E3E3E3" stroke-width="1" />
</g>
<rect x="46.40" y="298.50" width="1533.10" height="19.75" fill="#F2F2F2" />
<line x1="46.50" y1="176.50" x2="46.50" y2="194.50" stroke="#DCDCDC" stroke-width="1" />
<line x1="300.50" y1="176.50" x2="300.50" y2="194.50" stroke="#DCDCDC" stroke-width="1" />
<line x1="534.50" y1="176.50" x2="534.50" y2="194.50" stroke="#DCDCDC" stroke-width="1" />
<line x1="616.50" y1="176.50" x2="616.50" y2="194.50" stroke="#DCDCDC" stroke-width="1" />
<line x1="698.50" y1="176.50" x2="698.50" y2="194.50" stroke="#DCDCDC" stroke-width="1" />
<line x1="780.50" y1="176.50" x2="780.50" y2="194.50" stroke="#DCDCDC" stroke-width="1" />
<line x1="862.50" y1="176.50" x2="862.50" y2="194.50" stroke="#DCDCDC" stroke-width="1" />
<line x1="944.50" y1="176.50" x2="944.50" y2="194.50" stroke="#DCDCDC" stroke-width="1" />
<line x1="1026.50" y1="176.50" x2="1026.50" y2="194.50" stroke="#DCDCDC" stroke-width="1" />
<line x1="1108.50" y1="176.50" x2="1108.50" y2="194.50" stroke="#DCDCDC" stroke-width="1" />
<line x1="1190.50" y1="176.50" x2="1190.50" y2="194.50" stroke="#DCDCDC" stroke-width="1" />
<line x1="1272.50" y1="176.50" x2="1272.50" y2="194.50" stroke="#DCDCDC" stroke-width="1" />
<line x1="1354.50" y1="176.50" x2="1354.50" y2="194.50" stroke="#DCDCDC" stroke-width="1" />
<line x1="1436.50" y1="176.50" x2="1436.50" y2="194.50" stroke="#DCDCDC" stroke-width="1" />
<line x1="1518.50" y1="176.50" x2="1518.50" y2="194.50" stroke="#DCDCDC" stroke-width="1" />
<line x1="1600.50" y1="176.50" x2="1600.50" y2="194.50" stroke="#DCDCDC" stroke-width="1" />
<line x1="26.40" y1="176.50" x2="26.40" y2="194.50" stroke="#DCDCDC" stroke-width="1" />
<line x1="0.00" y1="213.40" x2="26.40" y2="213.40" stroke="#E0E0E0" stroke-width="1" />
<line x1="0.00" y1="255.50" x2="26.40" y2="255.50" stroke="#E0E0E0" stroke-width="1" />
<line x1="0.00" y1="284.50" x2="26.40" y2="284.50" stroke="#E0E0E0" stroke-width="1" />
<line x1="0.00" y1="299.00" x2="26.40" y2="299.00" stroke="#E0E0E0" stroke-width="1" />
<line x1="0.00" y1="318.25" x2="26.40" y2="318.25" stroke="#E0E0E0" stroke-width="1" />
<line x1="0.00" y1="337.58" x2="26.40" y2="337.58" stroke="#E0E0E0" stroke-width="1" />
<line x1="0.00" y1="356.91" x2="26.40" y2="356.91" stroke="#E0E0E0" stroke-width="1" />
<line x1="0.00" y1="376.24" x2="26.40" y2="376.24" stroke="#E0E0E0" stroke-width="1" />
<line x1="0.00" y1="395.57" x2="26.40" y2="395.57" stroke="#E0E0E0" stroke-width="1" />
<line x1="0.00" y1="414.90" x2="26.40" y2="414.90" stroke="#E0E0E0" stroke-width="1" />
<line x1="0.00" y1="434.23" x2="26.40" y2="434.23" stroke="#E0E0E0" stroke-width="1" />
<line x1="0.00" y1="453.56" x2="26.40" y2="453.56" stroke="#E0E0E0" stroke-width="1" />
<line x1="0.00" y1="472.89" x2="26.40" y2="472.89" stroke="#E0E0E0" stroke-width="1" />
<line x1="0.00" y1="492.22" x2="26.40" y2="492.22" stroke="#E0E0E0" stroke-width="1" />
<line x1="0.00" y1="511.55" x2="26.40" y2="511.55" stroke="#E0E0E0" stroke-width="1" />
<line x1="0.00" y1="530.88" x2="26.40" y2="530.88" stroke="#E0E0E0" stroke-width="1" />
<line x1="0.00" y1="550.21" x2="26.40" y2="550.21" stroke="#E0E0E0" stroke-width="1" />
<line x1="0.00" y1="569.54" x2="26.40" y2="569.54" stroke="#E0E0E0" stroke-width="1" />
<line x1="0.00" y1="588.87" x2="26.40" y2="588.87" stroke="#E0E0E0" stroke-width="1" />
<line x1="0.00" y1="608.20" x2="26.40" y2="608.20" stroke="#E0E0E0" stroke-width="1" />
<line x1="0.00" y1="627.53" x2="26.40" y2="627.53" stroke="#E0E0E0" stroke-width="1" />
<line x1="0.00" y1="646.86" x2="26.40" y2="646.86" stroke="#E0E0E0" stroke-width="1" />
<line x1="0.00" y1="666.19" x2="26.40" y2="666.19" stroke="#E0E0E0" stroke-width="1" />
<line x1="0.00" y1="685.52" x2="26.40" y2="685.52" stroke="#E0E0E0" stroke-width="1" />
<line x1="0.00" y1="704.85" x2="26.40" y2="704.85" stroke="#E0E0E0" stroke-width="1" />
<line x1="0.00" y1="724.18" x2="26.40" y2="724.18" stroke="#E0E0E0" stroke-width="1" />
<line x1="0.00" y1="743.51" x2="26.40" y2="743.51" stroke="#E0E0E0" stroke-width="1" />
<line x1="0.00" y1="762.84" x2="26.40" y2="762.84" stroke="#E0E0E0" stroke-width="1" />
<line x1="0.00" y1="782.17" x2="26.40" y2="782.17" stroke="#E0E0E0" stroke-width="1" />
<line x1="0.00" y1="801.50" x2="26.40" y2="801.50" stroke="#E0E0E0" stroke-width="1" />
<line x1="0.00" y1="820.83" x2="26.40" y2="820.83" stroke="#E0E0E0" stroke-width="1" />
<line x1="0.00" y1="840.16" x2="26.40" y2="840.16" stroke="#E0E0E0" stroke-width="1" />
<line x1="0.00" y1="859.49" x2="26.40" y2="859.49" stroke="#E0E0E0" stroke-width="1" />
<line x1="0.00" y1="878.82" x2="26.40" y2="878.82" stroke="#E0E0E0" stroke-width="1" />
<line x1="0.00" y1="898.15" x2="26.40" y2="898.15" stroke="#E0E0E0" stroke-width="1" />
<line x1="0.00" y1="917.48" x2="26.40" y2="917.48" stroke="#E0E0E0" stroke-width="1" />
<line x1="0.00" y1="936.81" x2="26.40" y2="936.81" stroke="#E0E0E0" stroke-width="1" />
<rect x="534.30" y="175.00" width="82.05" height="19.50" fill="#E1E1E1" />
<rect x="0.00" y="318.25" width="26.40" height="19.33" fill="#E1E1E1" />
<line x1="0.00" y1="194.50" x2="1579.50" y2="194.50" stroke="#BDBDBD" stroke-width="1.5" />
<line x1="26.40" y1="194.50" x2="26.40" y2="924.00" stroke="#BDBDBD" stroke-width="1.5" />
<line x1="534.30" y1="193.80" x2="616.35" y2="193.80" stroke="#217346" stroke-width="2.2" />
<line x1="25.60" y1="318.25" x2="25.60" y2="337.58" stroke="#217346" stroke-width="2" />
<path d="M11,192 L24,192 L24,179 Z" fill="#DEDEDE" />
<text x="36.40" y="189.80" font-family="Liberation Sans" font-size="13.08" fill="#3B3B3B" text-anchor="middle" >A</text>
<text x="173.60" y="189.80" font-family="Liberation Sans" font-size="13.08" fill="#3B3B3B" text-anchor="middle" >B</text>
<text x="417.55" y="189.80" font-family="Liberation Sans" font-size="13.08" fill="#3B3B3B" text-anchor="middle" >C</text>
<text x="575.32" y="189.80" font-family="Liberation Sans" font-size="13.08" fill="#1E6E3E" text-anchor="middle" >D</text>
<text x="657.38" y="189.80" font-family="Liberation Sans" font-size="13.08" fill="#3B3B3B" text-anchor="middle" >E</text>
<text x="739.42" y="189.80" font-family="Liberation Sans" font-size="13.08" fill="#3B3B3B" text-anchor="middle" >F</text>
<text x="821.47" y="189.80" font-family="Liberation Sans" font-size="13.08" fill="#3B3B3B" text-anchor="middle" >G</text>
<text x="903.52" y="189.80" font-family="Liberation Sans" font-size="13.08" fill="#3B3B3B" text-anchor="middle" >H</text>
<text x="985.57" y="189.80" font-family="Liberation Sans" font-size="13.08" fill="#3B3B3B" text-anchor="middle" >I</text>
<text x="1067.62" y="189.80" font-family="Liberation Sans" font-size="13.08" fill="#3B3B3B" text-anchor="middle" >J</text>
<text x="1149.67" y="189.80" font-family="Liberation Sans" font-size="13.08" fill="#3B3B3B" text-anchor="middle" >K</text>
<text x="1231.72" y="189.80" font-family="Liberation Sans" font-size="13.08" fill="#3B3B3B" text-anchor="middle" >L</text>
<text x="1313.78" y="189.80" font-family="Liberation Sans" font-size="13.08" fill="#3B3B3B" text-anchor="middle" >M</text>
<text x="1395.82" y="189.80" font-family="Liberation Sans" font-size="13.08" fill="#3B3B3B" text-anchor="middle" >N</text>
<text x="1477.88" y="189.80" font-family="Liberation Sans" font-size="13.08" fill="#3B3B3B" text-anchor="middle" >O</text>
<text x="1559.50" y="189.80" font-family="Liberation Sans" font-size="13.08" fill="#3B3B3B" text-anchor="middle" >P</text>
<text x="13.30" y="209.60" font-family="Liberation Sans" font-size="13.37" fill="#3B3B3B" text-anchor="middle" >1</text>
<text x="13.30" y="245.90" font-family="Liberation Sans" font-size="13.37" fill="#3B3B3B" text-anchor="middle" >2</text>
<text x="13.30" y="278.80" font-family="Liberation Sans" font-size="13.37" fill="#3B3B3B" text-anchor="middle" >3</text>
<text x="13.30" y="294.90" font-family="Liberation Sans" font-size="13.37" fill="#3B3B3B" text-anchor="middle" >4</text>
<text x="13.30" y="313.70" font-family="Liberation Sans" font-size="13.37" fill="#3B3B3B" text-anchor="middle" >5</text>
<text x="13.30" y="333.20" font-family="Liberation Sans" font-size="13.37" fill="#1E6E3E" text-anchor="middle" >6</text>
<text x="13.30" y="352.16" font-family="Liberation Sans" font-size="13.37" fill="#3B3B3B" text-anchor="middle" >7</text>
<text x="13.30" y="371.49" font-family="Liberation Sans" font-size="13.37" fill="#3B3B3B" text-anchor="middle" >8</text>
<text x="13.30" y="390.82" font-family="Liberation Sans" font-size="13.37" fill="#3B3B3B" text-anchor="middle" >9</text>
<text x="13.30" y="410.15" font-family="Liberation Sans" font-size="13.37" fill="#3B3B3B" text-anchor="middle" >10</text>
<text x="13.30" y="429.48" font-family="Liberation Sans" font-size="13.37" fill="#3B3B3B" text-anchor="middle" >11</text>
<text x="13.30" y="448.81" font-family="Liberation Sans" font-size="13.37" fill="#3B3B3B" text-anchor="middle" >12</text>
<text x="13.30" y="468.14" font-family="Liberation Sans" font-size="13.37" fill="#3B3B3B" text-anchor="middle" >13</text>
<text x="13.30" y="487.47" font-family="Liberation Sans" font-size="13.37" fill="#3B3B3B" text-anchor="middle" >14</text>
<text x="13.30" y="506.80" font-family="Liberation Sans" font-size="13.37" fill="#3B3B3B" text-anchor="middle" >15</text>
<text x="13.30" y="526.13" font-family="Liberation Sans" font-size="13.37" fill="#3B3B3B" text-anchor="middle" >16</text>
<text x="13.30" y="545.46" font-family="Liberation Sans" font-size="13.37" fill="#3B3B3B" text-anchor="middle" >17</text>
<text x="13.30" y="564.79" font-family="Liberation Sans" font-size="13.37" fill="#3B3B3B" text-anchor="middle" >18</text>
<text x="13.30" y="584.12" font-family="Liberation Sans" font-size="13.37" fill="#3B3B3B" text-anchor="middle" >19</text>
<text x="13.30" y="603.45" font-family="Liberation Sans" font-size="13.37" fill="#3B3B3B" text-anchor="middle" >20</text>
<text x="13.30" y="622.78" font-family="Liberation Sans" font-size="13.37" fill="#3B3B3B" text-anchor="middle" >21</text>
<text x="13.30" y="642.11" font-family="Liberation Sans" font-size="13.37" fill="#3B3B3B" text-anchor="middle" >22</text>
<text x="13.30" y="661.44" font-family="Liberation Sans" font-size="13.37" fill="#3B3B3B" text-anchor="middle" >23</text>
<text x="13.30" y="680.77" font-family="Liberation Sans" font-size="13.37" fill="#3B3B3B" text-anchor="middle" >24</text>
<text x="13.30" y="700.10" font-family="Liberation Sans" font-size="13.37" fill="#3B3B3B" text-anchor="middle" >25</text>
<text x="13.30" y="719.43" font-family="Liberation Sans" font-size="13.37" fill="#3B3B3B" text-anchor="middle" >26</text>
<text x="13.30" y="738.76" font-family="Liberation Sans" font-size="13.37" fill="#3B3B3B" text-anchor="middle" >27</text>
<text x="13.30" y="758.09" font-family="Liberation Sans" font-size="13.37" fill="#3B3B3B" text-anchor="middle" >28</text>
<text x="13.30" y="777.42" font-family="Liberation Sans" font-size="13.37" fill="#3B3B3B" text-anchor="middle" >29</text>
<text x="13.30" y="796.75" font-family="Liberation Sans" font-size="13.37" fill="#3B3B3B" text-anchor="middle" >30</text>
<text x="13.30" y="816.08" font-family="Liberation Sans" font-size="13.37" fill="#3B3B3B" text-anchor="middle" >31</text>
<text x="13.30" y="835.41" font-family="Liberation Sans" font-size="13.37" fill="#3B3B3B" text-anchor="middle" >32</text>
<text x="13.30" y="854.74" font-family="Liberation Sans" font-size="13.37" fill="#3B3B3B" text-anchor="middle" >33</text>
<text x="13.30" y="874.07" font-family="Liberation Sans" font-size="13.37" fill="#3B3B3B" text-anchor="middle" >34</text>
<text x="13.30" y="893.40" font-family="Liberation Sans" font-size="13.37" fill="#3B3B3B" text-anchor="middle" >35</text>
<text x="13.30" y="912.73" font-family="Liberation Sans" font-size="13.37" fill="#3B3B3B" text-anchor="middle" >36</text>
<clipPath id="r37"><rect x="0" y="917.4799999999999" width="26" height="6.5200000000000955"/></clipPath>
<text x="13.30" y="932.06" font-family="Liberation Sans" font-size="13.37" fill="#3B3B3B" text-anchor="middle" clip-path="url(#r37)">37</text>
<line x1="534.50" y1="175.00" x2="534.50" y2="924.00" stroke="#9B9B9B" stroke-width="1.2" />
<line x1="0.00" y1="318.25" x2="1579.50" y2="318.25" stroke="#9B9B9B" stroke-width="1.2" />
<line x1="46.40" y1="284.50" x2="300.80" y2="284.50" stroke="#262626" stroke-width="1.2" />
<line x1="534.30" y1="685.52" x2="1579.50" y2="685.52" stroke="#2B2B2B" stroke-width="1.2" />
<line x1="534.30" y1="704.85" x2="1579.50" y2="704.85" stroke="#A6A6A6" stroke-width="2.2" />
<text x="49.29" y="245.60" font-family="Liberation Sans" font-size="28.49" fill="#000" font-weight="bold" textLength="244.12" lengthAdjust="spacingAndGlyphs" >Cashflow Forecast</text>
<text x="48.65" y="278.90" font-family="Liberation Sans" font-size="17.44" fill="#000" textLength="143.39" lengthAdjust="spacingAndGlyphs" >As at: 25-Feb-2026</text>
<text x="48.16" y="313.95" font-family="Liberation Sans" font-size="13.95" fill="#000" font-weight="bold" textLength="105.67" lengthAdjust="spacingAndGlyphs" >Transaction Type</text>
<text x="302.91" y="313.95" font-family="Liberation Sans" font-size="13.95" fill="#000" font-weight="bold" textLength="70.42" lengthAdjust="spacingAndGlyphs" >Description</text>
<text x="48.18" y="352.61" font-family="Liberation Sans" font-size="13.66" fill="#000" textLength="102.64" lengthAdjust="spacingAndGlyphs" >Opening Balance</text>
<text x="302.93" y="352.61" font-family="Liberation Sans" font-size="13.66" fill="#000" textLength="102.64" lengthAdjust="spacingAndGlyphs" >Opening Balance</text>
<text x="48.18" y="391.27" font-family="Liberation Sans" font-size="13.66" fill="#000" textLength="51.64" lengthAdjust="spacingAndGlyphs" >Receipts</text>
<text x="302.93" y="391.27" font-family="Liberation Sans" font-size="13.66" fill="#000" textLength="135.24" lengthAdjust="spacingAndGlyphs" >Net Salary - Gascoigne</text>
<text x="48.18" y="429.93" font-family="Liberation Sans" font-size="13.66" fill="#000" textLength="98.94" lengthAdjust="spacingAndGlyphs" >Standing Orders</text>
<text x="302.93" y="429.93" font-family="Liberation Sans" font-size="13.66" fill="#000" textLength="75.64" lengthAdjust="spacingAndGlyphs" >Newspapers</text>
<text x="48.18" y="468.59" font-family="Liberation Sans" font-size="13.66" fill="#000" textLength="78.64" lengthAdjust="spacingAndGlyphs" >Direct Debits</text>
<text x="302.93" y="468.59" font-family="Liberation Sans" font-size="13.66" fill="#000" textLength="70.44" lengthAdjust="spacingAndGlyphs" >Council Tax</text>
<text x="302.93" y="487.92" font-family="Liberation Sans" font-size="13.66" fill="#000" textLength="99.34" lengthAdjust="spacingAndGlyphs" >Easy Broadband</text>
<text x="302.93" y="507.25" font-family="Liberation Sans" font-size="13.66" fill="#000" textLength="211.04" lengthAdjust="spacingAndGlyphs" >Halifax Building Society - Mortgage</text>
<text x="302.93" y="526.58" font-family="Liberation Sans" font-size="13.66" fill="#000" textLength="204.64" lengthAdjust="spacingAndGlyphs" >Octopus Energy - Gas &amp; Electricity</text>
<text x="48.18" y="565.24" font-family="Liberation Sans" font-size="13.66" fill="#000" textLength="141.64" lengthAdjust="spacingAndGlyphs" >Regular Card Payments</text>
<text x="302.93" y="565.24" font-family="Liberation Sans" font-size="13.66" fill="#000" textLength="109.14" lengthAdjust="spacingAndGlyphs" >Gym membership</text>
<text x="302.93" y="584.57" font-family="Liberation Sans" font-size="13.66" fill="#000" textLength="110.39" lengthAdjust="spacingAndGlyphs" >EE - Mobile Phone</text>
<text x="48.18" y="623.23" font-family="Liberation Sans" font-size="13.66" fill="#000" textLength="106.14" lengthAdjust="spacingAndGlyphs" >Sundry Payments</text>
<text x="302.93" y="623.23" font-family="Liberation Sans" font-size="13.66" fill="#000" textLength="58.39" lengthAdjust="spacingAndGlyphs" >Groceries</text>
<text x="302.93" y="642.56" font-family="Liberation Sans" font-size="13.66" fill="#000" textLength="114.64" lengthAdjust="spacingAndGlyphs" >Central Heating Oil</text>
<text x="302.93" y="661.89" font-family="Liberation Sans" font-size="13.66" fill="#000" textLength="115.89" lengthAdjust="spacingAndGlyphs" >Everyday Expenses</text>
<text x="47.91" y="700.55" font-family="Liberation Sans" font-size="13.95" fill="#000" font-weight="bold" textLength="102.17" lengthAdjust="spacingAndGlyphs" >Running Balance</text>
<text x="302.91" y="700.55" font-family="Liberation Sans" font-size="13.95" fill="#000" font-weight="bold" textLength="102.17" lengthAdjust="spacingAndGlyphs" >Running Balance</text>
<text x="47.93" y="758.54" font-family="Liberation Sans" font-size="13.66" fill="#333" font-style="italic" textLength="197.14" lengthAdjust="spacingAndGlyphs" >Generated on 25-Feb-2026 15:13</text>
<g clip-path="url(#gridclip)">
<text x="614.39" y="313.95" font-family="Liberation Sans" font-size="13.95" fill="#000" font-weight="bold" text-anchor="end" textLength="42.37" lengthAdjust="spacingAndGlyphs" >25-Feb</text>
<text x="696.44" y="313.95" font-family="Liberation Sans" font-size="13.95" fill="#000" font-weight="bold" text-anchor="end" textLength="42.37" lengthAdjust="spacingAndGlyphs" >26-Feb</text>
<text x="778.49" y="313.95" font-family="Liberation Sans" font-size="13.95" fill="#000" font-weight="bold" text-anchor="end" textLength="42.37" lengthAdjust="spacingAndGlyphs" >27-Feb</text>
<text x="860.54" y="313.95" font-family="Liberation Sans" font-size="13.95" fill="#000" font-weight="bold" text-anchor="end" textLength="42.37" lengthAdjust="spacingAndGlyphs" >28-Feb</text>
<text x="942.59" y="313.95" font-family="Liberation Sans" font-size="13.95" fill="#000" font-weight="bold" text-anchor="end" textLength="46.37" lengthAdjust="spacingAndGlyphs" >01-Mar</text>
<text x="1024.64" y="313.95" font-family="Liberation Sans" font-size="13.95" fill="#000" font-weight="bold" text-anchor="end" textLength="46.37" lengthAdjust="spacingAndGlyphs" >02-Mar</text>
<text x="1106.69" y="313.95" font-family="Liberation Sans" font-size="13.95" fill="#000" font-weight="bold" text-anchor="end" textLength="46.37" lengthAdjust="spacingAndGlyphs" >03-Mar</text>
<text x="1188.74" y="313.95" font-family="Liberation Sans" font-size="13.95" fill="#000" font-weight="bold" text-anchor="end" textLength="46.37" lengthAdjust="spacingAndGlyphs" >04-Mar</text>
<text x="1270.79" y="313.95" font-family="Liberation Sans" font-size="13.95" fill="#000" font-weight="bold" text-anchor="end" textLength="46.37" lengthAdjust="spacingAndGlyphs" >05-Mar</text>
<text x="1352.84" y="313.95" font-family="Liberation Sans" font-size="13.95" fill="#000" font-weight="bold" text-anchor="end" textLength="46.37" lengthAdjust="spacingAndGlyphs" >06-Mar</text>
<text x="1434.89" y="313.95" font-family="Liberation Sans" font-size="13.95" fill="#000" font-weight="bold" text-anchor="end" textLength="46.37" lengthAdjust="spacingAndGlyphs" >07-Mar</text>
<text x="1516.94" y="313.95" font-family="Liberation Sans" font-size="13.95" fill="#000" font-weight="bold" text-anchor="end" textLength="46.37" lengthAdjust="spacingAndGlyphs" >08-Mar</text>
<text x="1598.99" y="313.95" font-family="Liberation Sans" font-size="13.95" fill="#000" font-weight="bold" text-anchor="end" textLength="46.37" lengthAdjust="spacingAndGlyphs" >09-Mar</text>
<text x="614.37" y="352.61" font-family="Liberation Sans" font-size="13.66" fill="#0A870A" text-anchor="end" textLength="41.52" lengthAdjust="spacingAndGlyphs" >806.33</text>
<text x="860.52" y="391.27" font-family="Liberation Sans" font-size="13.66" fill="#0A870A" text-anchor="end" textLength="52.61" lengthAdjust="spacingAndGlyphs" >2,500.00</text>
<text x="778.47" y="429.93" font-family="Liberation Sans" font-size="13.66" fill="#FF0000" text-anchor="end" textLength="38.58" lengthAdjust="spacingAndGlyphs" >-13.56</text>
<text x="1352.82" y="429.93" font-family="Liberation Sans" font-size="13.66" fill="#FF0000" text-anchor="end" textLength="38.58" lengthAdjust="spacingAndGlyphs" >-13.56</text>
<text x="942.57" y="487.92" font-family="Liberation Sans" font-size="13.66" fill="#FF0000" text-anchor="end" textLength="38.58" lengthAdjust="spacingAndGlyphs" >-27.50</text>
<text x="1024.62" y="507.25" font-family="Liberation Sans" font-size="13.66" fill="#FF0000" text-anchor="end" textLength="46.01" lengthAdjust="spacingAndGlyphs" >-759.00</text>
<text x="1352.82" y="526.58" font-family="Liberation Sans" font-size="13.66" fill="#FF0000" text-anchor="end" textLength="46.01" lengthAdjust="spacingAndGlyphs" >-127.50</text>
<text x="1270.77" y="565.24" font-family="Liberation Sans" font-size="13.66" fill="#FF0000" text-anchor="end" textLength="38.58" lengthAdjust="spacingAndGlyphs" >-25.00</text>
<text x="1434.87" y="623.23" font-family="Liberation Sans" font-size="13.66" fill="#FF0000" text-anchor="end" textLength="46.01" lengthAdjust="spacingAndGlyphs" >-175.00</text>
<text x="1352.82" y="642.56" font-family="Liberation Sans" font-size="13.66" fill="#FF0000" text-anchor="end" textLength="46.01" lengthAdjust="spacingAndGlyphs" >-525.00</text>
<text x="614.37" y="661.89" font-family="Liberation Sans" font-size="13.66" fill="#FF0000" text-anchor="end" textLength="38.58" lengthAdjust="spacingAndGlyphs" >-15.00</text>
<text x="696.42" y="661.89" font-family="Liberation Sans" font-size="13.66" fill="#FF0000" text-anchor="end" textLength="38.58" lengthAdjust="spacingAndGlyphs" >-15.00</text>
<text x="778.47" y="661.89" font-family="Liberation Sans" font-size="13.66" fill="#FF0000" text-anchor="end" textLength="38.58" lengthAdjust="spacingAndGlyphs" >-15.00</text>
<text x="860.52" y="661.89" font-family="Liberation Sans" font-size="13.66" fill="#FF0000" text-anchor="end" textLength="38.58" lengthAdjust="spacingAndGlyphs" >-15.00</text>
<text x="942.57" y="661.89" font-family="Liberation Sans" font-size="13.66" fill="#FF0000" text-anchor="end" textLength="38.58" lengthAdjust="spacingAndGlyphs" >-15.00</text>
<text x="1024.62" y="661.89" font-family="Liberation Sans" font-size="13.66" fill="#FF0000" text-anchor="end" textLength="38.58" lengthAdjust="spacingAndGlyphs" >-15.00</text>
<text x="1106.67" y="661.89" font-family="Liberation Sans" font-size="13.66" fill="#FF0000" text-anchor="end" textLength="38.58" lengthAdjust="spacingAndGlyphs" >-15.00</text>
<text x="1188.72" y="661.89" font-family="Liberation Sans" font-size="13.66" fill="#FF0000" text-anchor="end" textLength="38.58" lengthAdjust="spacingAndGlyphs" >-15.00</text>
<text x="1270.77" y="661.89" font-family="Liberation Sans" font-size="13.66" fill="#FF0000" text-anchor="end" textLength="38.58" lengthAdjust="spacingAndGlyphs" >-15.00</text>
<text x="1352.82" y="661.89" font-family="Liberation Sans" font-size="13.66" fill="#FF0000" text-anchor="end" textLength="38.58" lengthAdjust="spacingAndGlyphs" >-15.00</text>
<text x="1434.87" y="661.89" font-family="Liberation Sans" font-size="13.66" fill="#FF0000" text-anchor="end" textLength="38.58" lengthAdjust="spacingAndGlyphs" >-15.00</text>
<text x="1516.92" y="661.89" font-family="Liberation Sans" font-size="13.66" fill="#FF0000" text-anchor="end" textLength="38.58" lengthAdjust="spacingAndGlyphs" >-15.00</text>
<text x="1598.97" y="661.89" font-family="Liberation Sans" font-size="13.66" fill="#FF0000" text-anchor="end" textLength="38.58" lengthAdjust="spacingAndGlyphs" >-15.00</text>
<text x="614.39" y="700.55" font-family="Liberation Sans" font-size="13.95" fill="#007A00" font-weight="bold" text-anchor="end" textLength="41.25" lengthAdjust="spacingAndGlyphs" >791.33</text>
<text x="696.44" y="700.55" font-family="Liberation Sans" font-size="13.95" fill="#007A00" font-weight="bold" text-anchor="end" textLength="41.25" lengthAdjust="spacingAndGlyphs" >776.33</text>
<text x="778.49" y="700.55" font-family="Liberation Sans" font-size="13.95" fill="#007A00" font-weight="bold" text-anchor="end" textLength="41.25" lengthAdjust="spacingAndGlyphs" >747.77</text>
<text x="860.54" y="700.55" font-family="Liberation Sans" font-size="13.95" fill="#007A00" font-weight="bold" text-anchor="end" textLength="52.35" lengthAdjust="spacingAndGlyphs" >3,232.77</text>
<text x="942.59" y="700.55" font-family="Liberation Sans" font-size="13.95" fill="#007A00" font-weight="bold" text-anchor="end" textLength="52.35" lengthAdjust="spacingAndGlyphs" >3,190.27</text>
<text x="1024.64" y="700.55" font-family="Liberation Sans" font-size="13.95" fill="#007A00" font-weight="bold" text-anchor="end" textLength="52.35" lengthAdjust="spacingAndGlyphs" >2,416.27</text>
<text x="1106.69" y="700.55" font-family="Liberation Sans" font-size="13.95" fill="#007A00" font-weight="bold" text-anchor="end" textLength="52.35" lengthAdjust="spacingAndGlyphs" >2,401.27</text>
<text x="1188.74" y="700.55" font-family="Liberation Sans" font-size="13.95" fill="#007A00" font-weight="bold" text-anchor="end" textLength="52.35" lengthAdjust="spacingAndGlyphs" >2,386.27</text>
<text x="1270.79" y="700.55" font-family="Liberation Sans" font-size="13.95" fill="#007A00" font-weight="bold" text-anchor="end" textLength="52.35" lengthAdjust="spacingAndGlyphs" >2,346.27</text>
<text x="1352.84" y="700.55" font-family="Liberation Sans" font-size="13.95" fill="#007A00" font-weight="bold" text-anchor="end" textLength="52.35" lengthAdjust="spacingAndGlyphs" >1,665.21</text>
<text x="1434.89" y="700.55" font-family="Liberation Sans" font-size="13.95" fill="#007A00" font-weight="bold" text-anchor="end" textLength="52.35" lengthAdjust="spacingAndGlyphs" >1,475.21</text>
<text x="1516.94" y="700.55" font-family="Liberation Sans" font-size="13.95" fill="#007A00" font-weight="bold" text-anchor="end" textLength="52.35" lengthAdjust="spacingAndGlyphs" >1,460.21</text>
<text x="1598.99" y="700.55" font-family="Liberation Sans" font-size="13.95" fill="#007A00" font-weight="bold" text-anchor="end" textLength="52.35" lengthAdjust="spacingAndGlyphs" >1,445.21</text>
</g>
<line x1="534.00" y1="318.05" x2="616.85" y2="318.05" stroke="#3A8259" stroke-width="1.3" />
<line x1="534.10" y1="318.05" x2="534.10" y2="338.38" stroke="#3A8259" stroke-width="1.4" />
<line x1="616.65" y1="318.05" x2="616.65" y2="335.58" stroke="#3A8259" stroke-width="1.4" />
<line x1="534.10" y1="337.78" x2="614.35" y2="337.78" stroke="#3A8259" stroke-width="2.0" />
<rect x="614.15" y="335.28" width="5.00" height="5.00" fill="#2F7A4F" />
<rect x="0.00" y="924.00" width="1599.00" height="32.00" fill="#E2ECEB" />
<path d="M104.7,924 H110.7 V930 A6,6 0 0 0 104.7,924 Z" fill="#FFFFFF" />
<path d="M210,924 H204 V930 A6,6 0 0 1 210,924 Z" fill="#FFFFFF" />
<rect x="1579.50" y="175.00" width="19.50" height="749.00" fill="#E6EEF1" />
<rect x="1581.50" y="175.50" width="17.00" height="750.00" fill="#F3F3F3" rx="8.5" />
<path d="M1585.3,187 L1594.5,187 L1589.9,180.6 Z" fill="#6E6E6E" />
<rect x="1585.80" y="192.60" width="8.00" height="699.30" fill="#707070" rx="4" />
<path d="M1585.3,913.3 L1595,913.3 L1590.1,919.9 Z" fill="#6E6E6E" />
<path d="M110.7,924 H204 V945.6 a6,6 0 0 1 -6,6 H116.7 a6,6 0 0 1 -6,-6 Z" fill="#FFFFFF" />
<text x="118.23" y="942.80" font-family="Liberation Sans" font-size="14.53" fill="#242424" textLength="78.14" lengthAdjust="spacingAndGlyphs" >ExportSheet</text>
<rect x="118.60" y="947.30" width="77.40" height="2.20" fill="#107C41" rx="1" />
<path d="M29.6,934.7 l-5.5,4.65 l5.5,4.65" fill="none" stroke="#8A8A8A" stroke-width="1.1" />
<path d="M56,934.7 l5.5,4.65 l-5.5,4.65" fill="none" stroke="#8A8A8A" stroke-width="1.1" />
<line x1="208.60" y1="932.00" x2="208.60" y2="948.00" stroke="#C8CFCF" stroke-width="1" />
<path d="M256.4,933.4 v11.6 M250.5,939.2 h11.8" fill="none" stroke="#424242" stroke-width="1.2" />
<rect x="962.00" y="934.60" width="2.40" height="2.40" fill="#303030" rx="1" />
<rect x="962.00" y="939.00" width="2.40" height="2.40" fill="#303030" rx="1" />
<rect x="962.00" y="943.40" width="2.40" height="2.40" fill="#303030" rx="1" />
<rect x="979.00" y="931.00" width="600.50" height="16.75" fill="#F3F3F3" rx="8.4" />
<path d="M991.3,935 L991.3,943.75 L984.4,939.4 Z" fill="#6E6E6E" />
<rect x="996.90" y="935.00" width="108.70" height="8.10" fill="#707070" rx="4" />
<path d="M1568.3,935 L1568.3,943.6 L1575.2,939.3 Z" fill="#6E6E6E" />
<rect x="0.00" y="956.00" width="1599.00" height="23.00" fill="#F3F3F3" />
<rect x="0.00" y="977.60" width="1599.00" height="1.40" fill="#98AEAE" />
<text x="10.25" y="971.30" font-family="Liberation Sans" font-size="10.90" fill="#505050" textLength="29.31" lengthAdjust="spacingAndGlyphs" >Ready</text>
<text x="108.15" y="971.30" font-family="Liberation Sans" font-size="10.90" fill="#242424" font-weight="bold" textLength="125.51" lengthAdjust="spacingAndGlyphs" >Accessibility: Investigate</text>
<path d="M63.5,973.5 h-4 v-12 h13.5 v4.5" fill="none" stroke="#404040" stroke-width="1.1" />
<line x1="59.50" y1="963.70" x2="73.00" y2="963.70" stroke="#404040" stroke-width="1" />
<path d="M61.5,966.5 h2.5 M61.5,968.8 h2 M61.5,971 h2" fill="none" stroke="#404040" stroke-width="0.9" />
<circle cx="68.8" cy="969.6" r="3.9" fill="#F3F3F3" stroke="#404040" stroke-width="1.1"/><circle cx="68.8" cy="969.6" r="1.7" fill="#303030"/>
<circle cx="96.3" cy="962.6" r="1.9" fill="none" stroke="#404040" stroke-width="1.1"/>
<path d="M90.6,963.3 q0.6,-1.3 1.8,-0.5 l2.6,2.3 h2.6 l2.6,-2.3 q1.2,-0.8 1.8,0.5 l-3.4,3.3 v1.5 M94.2,966.1 l-0.6,6.3 q-0.2,1.4 1.2,1.2 l1.9,-4 l1.3,2.5" fill="none" stroke="#404040" stroke-width="1.05" stroke-linejoin="round"/>
<path d="M98.3,968.2 l5.8,5.9 M103.9,968.2 l-5.6,5.9" fill="none" stroke="#404040" stroke-width="1" />
<rect x="1303.10" y="956.70" width="39.50" height="22.30" fill="#E0E0E0" />
<rect x="1315.50" y="960.50" width="13.50" height="12.10" fill="none" stroke="#303030" stroke-width="1.2" />
<line x1="1320.00" y1="960.50" x2="1320.00" y2="972.60" stroke="#303030" stroke-width="1.2" />
<line x1="1315.50" y1="964.53" x2="1329.00" y2="964.53" stroke="#303030" stroke-width="1.2" />
<line x1="1324.50" y1="960.50" x2="1324.50" y2="972.60" stroke="#303030" stroke-width="1.2" />
<line x1="1315.50" y1="968.57" x2="1329.00" y2="968.57" stroke="#303030" stroke-width="1.2" />
<rect x="1356.00" y="960.70" width="13.50" height="11.60" fill="none" stroke="#404040" stroke-width="1.1" />
<rect x="1358.50" y="963.00" width="8.50" height="7.20" fill="none" stroke="#404040" stroke-width="1" />
<line x1="1360.00" y1="965.00" x2="1365.50" y2="965.00" stroke="#404040" stroke-width="0.8" />
<line x1="1360.00" y1="966.80" x2="1365.50" y2="966.80" stroke="#404040" stroke-width="0.8" />
<line x1="1360.00" y1="968.60" x2="1365.50" y2="968.60" stroke="#404040" stroke-width="0.8" />
<path d="M1395.5,960.5 h14 v12 h-14 z M1399,960.5 v5 h4 v-5 M1395.5,968 h9 v-7.5" fill="none" stroke="#404040" stroke-width="1.1" />
<line x1="1427.60" y1="967.20" x2="1435.30" y2="967.20" stroke="#A0A0A0" stroke-width="1.2" />
<line x1="1441.70" y1="967.20" x2="1539.70" y2="967.20" stroke="#6E6E6E" stroke-width="1.2" />
<rect x="1488.00" y="961.00" width="5.00" height="11.60" fill="#5A5A5A" rx="1" />
<path d="M1545,967.2 h7.8 M1548.9,963.3 v7.8" fill="none" stroke="#A0A0A0" stroke-width="1.2" />
<text x="1565.56" y="971.30" font-family="Liberation Sans" font-size="10.61" fill="#505050" textLength="26.77" lengthAdjust="spacingAndGlyphs" >100%</text>
</svg></body></html>
